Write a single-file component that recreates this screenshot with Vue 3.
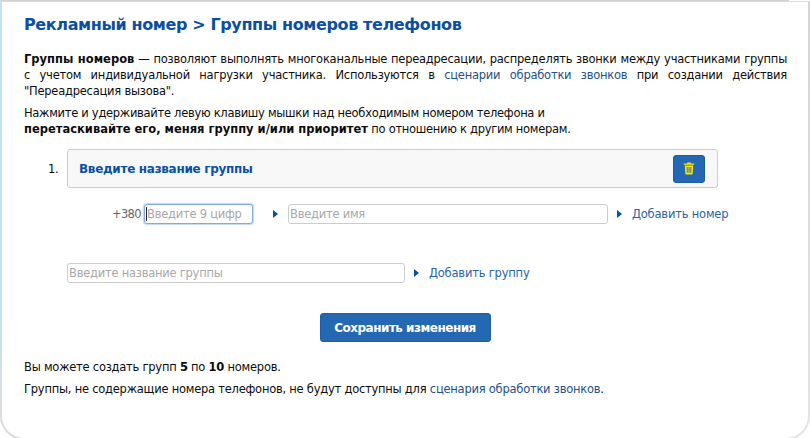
<script setup>
</script>

<template>
  <div class="shell">
    <div class="top-strip"></div>
    <div class="frame">
      <div class="page">
        <h1 class="title">Рекламный номер &gt; Группы номеров телефонов</h1>
        <p class="lead">
          <b>Группы номеров</b> — позволяют выполнять многоканальные переадресации, распределять звонки между участниками группы с учетом индивидуальной нагрузки участника. Используются в <a class="link">сценарии обработки звонков</a> при создании действия "Переадресация вызова".
        </p>
        <p class="hint">
          Нажмите и удерживайте левую клавишу мышки над необходимым номером телефона и<br />
          <b>перетаскивайте его, меняя группу и/или приоритет</b> по отношению к другим номерам.
        </p>

        <div class="group-row">
          <span class="num">1.</span>
          <div class="group-card">
            <span class="group-name">Введите название группы</span>
            <button class="trash" type="button" aria-label="Удалить">
              <svg width="12" height="13" viewBox="0 0 12 13">
                <path d="M4.2 1.4V.6h3.6v.8H11.2v1.4H.8V1.4z" fill="#ffe600" />
                <path d="M1.8 3.6h8.4l-.5 8a1 1 0 0 1-1 .9H3.3a1 1 0 0 1-1-.9z" fill="#ffe600" />
                <path d="M4.2 5v5.8M6 5v5.8M7.8 5v5.8" stroke="#2468b4" stroke-width=".9" />
              </svg>
            </button>
          </div>
        </div>

        <div class="phone-row">
          <span class="prefix">+380</span>
          <div class="fake-input focus"><i class="caret"></i>Введите 9 цифр</div>
          <i class="tri first"></i>
          <div class="fake-input name">Введите имя</div>
          <i class="tri"></i>
          <a class="add">Добавить номер</a>
        </div>

        <div class="new-row">
          <div class="fake-input newgroup">Введите название группы</div>
          <i class="tri"></i>
          <a class="add">Добавить группу</a>
        </div>

        <div class="save-wrap">
          <button class="save" type="button">Сохранить изменения</button>
        </div>

        <p class="foot">Вы можете создать групп <b>5</b> по <b>10</b> номеров.</p>
        <p class="foot second">Группы, не содержащие номера телефонов, не будут доступны для <a class="link">сценария обработки звонков</a>.</p>
      </div>
    </div>
  </div>
</template>

<style>
html, body { margin: 0; background: #fff; overflow: hidden; }
</style>

<style scoped>
.shell { width: 810px; height: 438px; background: #fff; overflow: hidden; }
.top-strip { width: 789px; height: 1px; background: #d2d2d2; }
.frame {
  box-sizing: border-box;
  width: 810px;
  height: 439px;
  padding: 1px 2px 2px 2px;
  border-bottom-left-radius: 24px;
  border-bottom-right-radius: 24px;
  background:
    linear-gradient(#b9e8f5, #b9e8f5) 0 0 / 100% 1px no-repeat,
    linear-gradient(#bfe4f3 0, #bfe4f3 72%, #dcdcdc 92%) 0 0 / 50% 100% no-repeat,
    linear-gradient(#d4d4d4, #e4e4e4) 100% 0 / 50% 100% no-repeat;
}
.page {
  box-sizing: border-box;
  height: 100%;
  padding: 13px 22px 0;
  background: #fff;
  border-bottom-left-radius: 22px;
  border-bottom-right-radius: 22px;
  font-family: "DejaVu Sans", sans-serif;
  font-size: 11.5px;
  letter-spacing: -0.24px;
  color: #0c0c0c;
}
.title {
  margin: 0;
  font-size: 16px;
  line-height: 20px;
  font-weight: 700;
  letter-spacing: -0.38px;
  color: #0b4fa3;
}
.lead {
  margin: 16px 0 0;
  width: 763px;
  line-height: 16px;
  text-align: justify;
}
.lead b, .hint b { letter-spacing: 0; }
.hint {
  margin: 6px 0 0;
  line-height: 16px;
  letter-spacing: -0.29px;
}
.link { color: #24508a; }
.group-row {
  display: flex;
  align-items: center;
  margin-top: 12px;
}
.num { width: 43px; padding-left: 24px; box-sizing: border-box; }
.group-card {
  box-sizing: border-box;
  width: 651px;
  height: 39px;
  display: flex;
  align-items: center;
  justify-content: space-between;
  padding: 0 12px 0 11px;
  background: #f8f8f8;
  border: 1px solid #ccc;
  border-radius: 3px;
}
.group-name { font-weight: 700; color: #0b4fa3; font-size: 12px; letter-spacing: -0.3px; }
.trash {
  width: 32px;
  height: 28px;
  padding: 0;
  display: flex;
  align-items: center;
  justify-content: center;
  background: #2468b4;
  border: 1px solid #1a5ba6;
  border-radius: 3px;
}
.phone-row, .new-row { display: flex; align-items: center; }
.phone-row { margin-top: 16px; padding-left: 88px; }
.new-row { margin-top: 39px; padding-left: 43px; }
.prefix { color: #666; width: 32px; letter-spacing: -0.7px; }
.fake-input {
  box-sizing: border-box;
  height: 20px;
  line-height: 18px;
  border: 1px solid #ccc;
  border-radius: 3px;
  color: #a8a8a8;
  padding-left: 1px;
  white-space: nowrap;
  overflow: hidden;
  background: #fff;
}
.focus {
  width: 109px;
  border-color: #82a8e6;
  box-shadow: 0 0 1px 1px #c4d6f5;
}
.caret {
  display: inline-block;
  width: 1px;
  height: 14px;
  background: #222;
  vertical-align: -3px;
}
.name { width: 320px; }
.newgroup { width: 338px; }
.tri {
  width: 0;
  height: 0;
  border-left: 5px solid #0b4fa3;
  border-top: 4px solid transparent;
  border-bottom: 4px solid transparent;
  margin: 0 10px 0 9px;
}
.tri.first { margin: 0 10px 0 20px; }
.add { color: #2a63a8; letter-spacing: -0.2px; }
.save-wrap { display: flex; justify-content: center; margin-top: 30px; }
.save {
  box-sizing: border-box;
  width: 171px;
  height: 29px;
  padding: 0;
  background: #2468b4;
  border: 1px solid #1f5fa8;
  border-radius: 3px;
  color: #fff;
  font: 700 12px "DejaVu Sans", sans-serif;
  letter-spacing: -0.5px;
  white-space: nowrap;
}
.foot { margin: 17px 0 0; line-height: 16px; }
.foot.second { margin-top: 6px; }
</style>
